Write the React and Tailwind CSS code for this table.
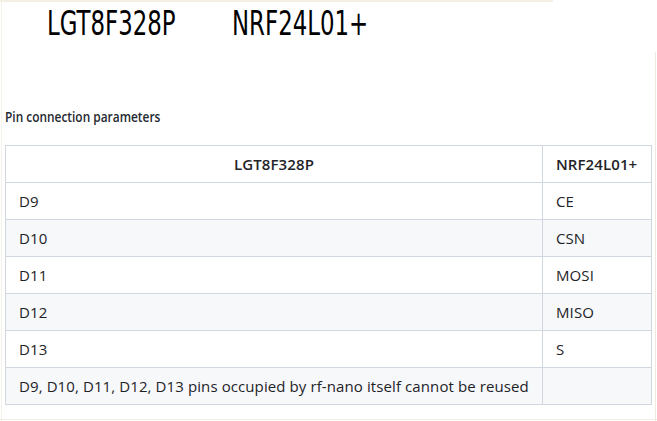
const rows = [
  ["D9", "CE"],
  ["D10", "CSN"],
  ["D11", "MOSI"],
  ["D12", "MISO"],
  ["D13", "S"],
  ["D9, D10, D11, D12, D13 pins occupied by rf-nano itself cannot be reused", ""],
];

export default function App() {
  return (
    <div className="relative h-[421px] w-[657px] overflow-hidden bg-white text-[#1f2328] [font-family:'Open_Sans',sans-serif]">
      {/* faint frame of the page behind */}
      <div className="absolute left-0 top-0 h-[2px] w-[553px] bg-[#f3efe4]" />
      <div className="absolute left-[1px] top-0 h-full w-px bg-[#f5f2ea]" />
      <div className="absolute right-[1px] top-[52px] h-full w-px bg-[#eeeae0]" />
      <div className="absolute bottom-[1px] left-0 h-px w-full bg-[#f3efe4]" />

      <div className="flex h-[60px] items-center pb-[14px] pl-[47px] text-[33px] leading-none text-black [font-family:'DejaVu_Sans_Condensed','DejaVu_Sans',sans-serif]">
        <span className="w-[185px] whitespace-nowrap">
          <span className="inline-block origin-left scale-x-[0.77]">LGT8F328P</span>
        </span>
        <span className="whitespace-nowrap">
          <span className="inline-block origin-left scale-x-[0.77]">NRF24L01+</span>
        </span>
      </div>

      <p className="mt-[47px] whitespace-nowrap pl-[5px] text-[14px] font-semibold leading-5 text-[#24292f]">
        <span className="inline-block origin-left scale-x-[0.85]">Pin connection parameters</span>
      </p>

      <table className="ml-[5px] mt-[18px] w-[647px] border-collapse text-[15px] tracking-[0.1px]">
        <thead>
          <tr className="h-[37px]">
            <th className="border border-[#d0d7de] px-[13px] text-center font-semibold">LGT8F328P</th>
            <th className="w-[109px] border border-[#d0d7de] px-[13px] text-left font-semibold">NRF24L01+</th>
          </tr>
        </thead>
        <tbody>
          {rows.map(([a, b], i) => (
            <tr key={a} className={`h-[37px] ${i % 2 === 1 ? "bg-[#f6f8fa]" : "bg-white"}`}>
              <td className="border border-[#d0d7de] px-[13px]">{a}</td>
              <td className="border border-[#d0d7de] px-[13px]">{b}</td>
            </tr>
          ))}
        </tbody>
      </table>
    </div>
  );
}
